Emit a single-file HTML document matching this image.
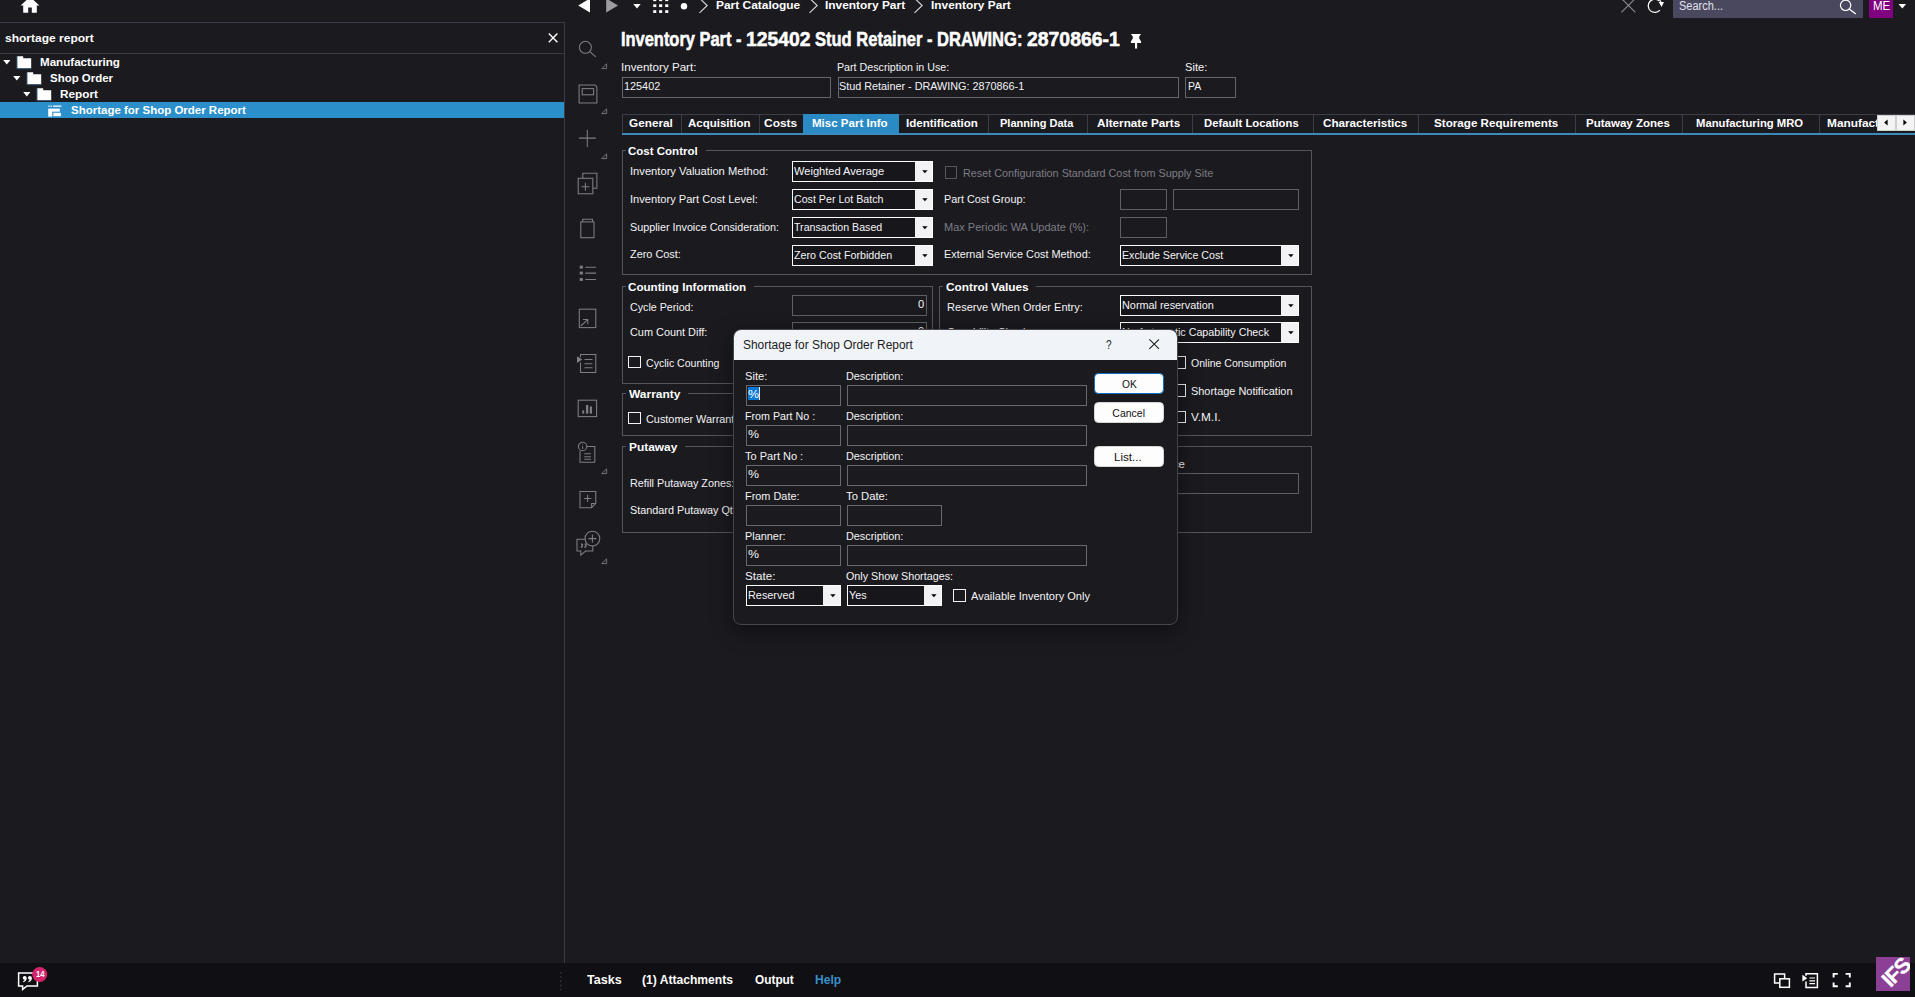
<!DOCTYPE html>
<html><head><meta charset="utf-8"><title>Inventory Part</title>
<style>
html,body{margin:0;padding:0;}
body{width:1915px;height:997px;overflow:hidden;background:#1b1a1f;font-family:"Liberation Sans",sans-serif;}
#root{position:absolute;left:0;top:0;width:1915px;height:997px;overflow:hidden;}
#root div,#root svg{position:absolute;box-sizing:border-box;}
svg{overflow:visible;}
.t{position:absolute;white-space:nowrap;transform-origin:0 0;display:block;}
</style></head>
<body><div id="root">
<div style="left:0px;top:963px;width:1915px;height:34px;background:#100f14;"></div>
<div style="left:0px;top:22px;width:565px;height:1px;background:#3b3b48;"></div>
<div style="left:0px;top:53px;width:565px;height:1px;background:#3b3b48;"></div>
<div style="left:564px;top:22px;width:1px;height:941px;background:#3b3b48;"></div>
<svg style="left:21px;top:0px;" width="18" height="13" viewBox="0 0 18 13"><path d="M9 -3.2 L-0.4 5.6 L2.2 5.6 L2.2 12.8 L7.2 12.8 L7.2 7.6 L10.8 7.6 L10.8 12.8 L15.8 12.8 L15.8 5.6 L18.4 5.6 Z" fill="#fff"/></svg>
<svg style="left:578px;top:0px;" width="13" height="13" viewBox="0 0 13 13"><path d="M12 -1.6 L12 12.6 L0.2 5.5 Z" fill="#fff"/></svg>
<svg style="left:606px;top:0px;" width="13" height="13" viewBox="0 0 13 13"><path d="M0.2 -1.6 L0.2 12.6 L12 5.5 Z" fill="#9c9ca1"/></svg>
<svg style="left:633px;top:4px;" width="8" height="5" viewBox="0 0 8 5"><path d="M0.3 0 L7.7 0 L4 4.6 Z" fill="#fff"/></svg>
<svg style="left:652.8px;top:0px;" width="16" height="13" viewBox="0 0 16 13"><rect x="0.2" y="-1.6" width="3.1" height="2.75" fill="#fff"/><rect x="0.2" y="4.3" width="3.1" height="2.75" fill="#fff"/><rect x="0.2" y="10.2" width="3.1" height="2.75" fill="#fff"/><rect x="6.1" y="-1.6" width="3.1" height="2.75" fill="#fff"/><rect x="6.1" y="4.3" width="3.1" height="2.75" fill="#fff"/><rect x="6.1" y="10.2" width="3.1" height="2.75" fill="#fff"/><rect x="12.2" y="-1.6" width="3.1" height="2.75" fill="#fff"/><rect x="12.2" y="4.3" width="3.1" height="2.75" fill="#fff"/><rect x="12.2" y="10.2" width="3.1" height="2.75" fill="#fff"/></svg>
<svg style="left:680px;top:2px;" width="8" height="8" viewBox="0 0 8 8"><circle cx="4" cy="4.3" r="3.2" fill="#fff"/></svg>
<svg style="left:698.8px;top:0px;" width="10" height="13" viewBox="0 0 10 13"><path d="M0.5 -1.8 L8.2 5.5 L0.5 12.8" fill="none" stroke="#d8d8dc" stroke-width="1.1"/></svg>
<svg style="left:808.6px;top:0px;" width="10" height="13" viewBox="0 0 10 13"><path d="M0.5 -1.8 L8.2 5.5 L0.5 12.8" fill="none" stroke="#d8d8dc" stroke-width="1.1"/></svg>
<svg style="left:913.9px;top:0px;" width="10" height="13" viewBox="0 0 10 13"><path d="M0.5 -1.8 L8.2 5.5 L0.5 12.8" fill="none" stroke="#d8d8dc" stroke-width="1.1"/></svg>
<span class="t" style="left:716.10px;top:-1.78px;font-size:11.5px;line-height:15px;color:#ffffff;font-weight:700;transform:scaleX(1.0373);">Part Catalogue</span>
<span class="t" style="left:825.40px;top:-1.78px;font-size:11.5px;line-height:15px;color:#ffffff;font-weight:700;transform:scaleX(1.0358);">Inventory Part</span>
<span class="t" style="left:930.70px;top:-1.78px;font-size:11.5px;line-height:15px;color:#ffffff;font-weight:700;transform:scaleX(1.0320);">Inventory Part</span>
<svg style="left:1621px;top:0px;" width="15" height="13" viewBox="0 0 15 13"><path d="M0.4 -1.6 L14.4 12.4 M14.4 -1.6 L0.4 12.4" stroke="#8e8e93" stroke-width="1.1" fill="none"/></svg>
<svg style="left:1648px;top:0px;" width="18" height="14" viewBox="0 0 18 14"><path d="M11.86 10.14 A6.6 6.6 0 1 1 11.2 0.9" fill="none" stroke="#fff" stroke-width="1.25"/><path d="M10.7 2.1 L16 2.1 L13.6 7 Z" fill="#fff"/><path d="M11.2 -1 L13 2.4" stroke="#fff" stroke-width="1.2"/></svg>
<div style="left:1673px;top:0px;width:190px;height:18px;background:#4a485e;"></div>
<span class="t" style="left:1679.10px;top:-2.16px;font-size:12px;line-height:16px;color:#e2e2f0;transform:scaleX(0.9161);">Search...</span>
<svg style="left:1838px;top:0px;" width="20" height="16" viewBox="0 0 20 16"><circle cx="7.6" cy="5.3" r="5.2" fill="none" stroke="#fff" stroke-width="1.2"/><path d="M11.3 9 L17.8 13.9" stroke="#fff" stroke-width="1.3"/></svg>
<div style="left:1869px;top:0px;width:24px;height:17.5px;background:#800080;"></div>
<span class="t" style="left:1873.10px;top:-3.00px;font-size:13px;line-height:17px;color:#ffffff;transform:scaleX(0.8872);">ME</span>
<svg style="left:1898px;top:4px;" width="9" height="5" viewBox="0 0 9 5"><path d="M0.5 0 L8.1 0 L4.3 4.4 Z" fill="#fff"/></svg>
<span class="t" style="left:5.10px;top:31.19px;font-size:11px;line-height:14px;color:#ffffff;font-weight:700;transform:scaleX(1.0923);">shortage report</span>
<svg style="left:548px;top:33px;" width="10" height="10" viewBox="0 0 10 10"><path d="M0.8 0.6 L9.4 9.2 M9.4 0.6 L0.8 9.2" stroke="#fff" stroke-width="1.4" fill="none"/></svg>
<svg style="left:3px;top:60.2px;" width="8" height="5" viewBox="0 0 8 5"><path d="M0.2 0 L7.4 0 L3.8 4.6 Z" fill="#fff"/></svg>
<svg style="left:17px;top:56.3px;" width="15" height="13" viewBox="0 0 15 13"><path d="M0.3 0.2 L6.2 0.2 L6.2 2.2 L14.2 2.2 L14.2 12.2 L0.3 12.2 Z" fill="#fff"/><path d="M0.3 12.8 L14.6 12.8 M-0.3 0.2 L-0.3 12.6" stroke="#2f6f9a" stroke-width="0.8" opacity="0.7"/></svg>
<span class="t" style="left:39.70px;top:55.19px;font-size:11px;line-height:14px;color:#ffffff;font-weight:700;transform:scaleX(1.0544);">Manufacturing</span>
<svg style="left:13px;top:76.2px;" width="8" height="5" viewBox="0 0 8 5"><path d="M0.2 0 L7.4 0 L3.8 4.6 Z" fill="#fff"/></svg>
<svg style="left:27px;top:72.3px;" width="15" height="13" viewBox="0 0 15 13"><path d="M0.3 0.2 L6.2 0.2 L6.2 2.2 L14.2 2.2 L14.2 12.2 L0.3 12.2 Z" fill="#fff"/><path d="M0.3 12.8 L14.6 12.8 M-0.3 0.2 L-0.3 12.6" stroke="#2f6f9a" stroke-width="0.8" opacity="0.7"/></svg>
<span class="t" style="left:50.40px;top:71.19px;font-size:11px;line-height:14px;color:#ffffff;font-weight:700;transform:scaleX(1.0411);">Shop Order</span>
<svg style="left:23px;top:92.2px;" width="8" height="5" viewBox="0 0 8 5"><path d="M0.2 0 L7.4 0 L3.8 4.6 Z" fill="#fff"/></svg>
<svg style="left:37px;top:88.3px;" width="15" height="13" viewBox="0 0 15 13"><path d="M0.3 0.2 L6.2 0.2 L6.2 2.2 L14.2 2.2 L14.2 12.2 L0.3 12.2 Z" fill="#fff"/><path d="M0.3 12.8 L14.6 12.8 M-0.3 0.2 L-0.3 12.6" stroke="#2f6f9a" stroke-width="0.8" opacity="0.7"/></svg>
<span class="t" style="left:59.80px;top:87.19px;font-size:11px;line-height:14px;color:#ffffff;font-weight:700;transform:scaleX(1.0690);">Report</span>
<div style="left:0px;top:102px;width:564px;height:16px;background:#2a8fcb;"></div>
<svg style="left:48px;top:106px;" width="14" height="11" viewBox="0 0 14 11"><path d="M0.3 0.2 h1.4 M2.6 0.2 h1.4 M5 0.2 h8.4" stroke="#fff" stroke-width="1.3"/><rect x="0.2" y="2.6" width="11.6" height="8" fill="#fff"/><rect x="4.8" y="6.2" width="8.6" height="4.6" fill="#fff" stroke="#2a8fcb" stroke-width="1.1"/></svg>
<span class="t" style="left:70.80px;top:103.19px;font-size:11px;line-height:14px;color:#ffffff;font-weight:700;transform:scaleX(1.0444);">Shortage for Shop Order Report</span>
<svg style="left:578px;top:40px;" width="20" height="18" viewBox="0 0 20 18"><circle cx="7.4" cy="7.3" r="6" fill="none" stroke="#7e7e85" stroke-width="1.05"/><path d="M11.8 11.6 L17.8 16.8" fill="none" stroke="#7e7e85" stroke-width="1.05"/></svg>
<svg style="left:601px;top:63px;" width="7" height="7" viewBox="0 0 7 7"><path d="M5.6 0.8 L5.6 5.6 L0.8 5.6 Z" fill="none" stroke="#7e7e85" stroke-width="0.9"/></svg>
<svg style="left:578px;top:84px;" width="20" height="20" viewBox="0 0 20 20"><path d="M1.1 1 L15.6 1 Q18.9 1 18.9 4.2 L18.9 18.9 L1.1 18.9 Z" fill="none" stroke="#7e7e85" stroke-width="1.05"/><rect x="4.2" y="4.6" width="11.4" height="6.2" fill="none" stroke="#7e7e85" stroke-width="1.05"/></svg>
<svg style="left:601px;top:108px;" width="7" height="7" viewBox="0 0 7 7"><path d="M5.6 0.8 L5.6 5.6 L0.8 5.6 Z" fill="none" stroke="#7e7e85" stroke-width="0.9"/></svg>
<svg style="left:578px;top:129px;" width="20" height="19" viewBox="0 0 20 19"><path d="M1 9.1 L17.8 9.1 M9.3 1 L9.3 18" fill="none" stroke="#7e7e85" stroke-width="1.05"/></svg>
<svg style="left:601px;top:153px;" width="7" height="7" viewBox="0 0 7 7"><path d="M5.6 0.8 L5.6 5.6 L0.8 5.6 Z" fill="none" stroke="#7e7e85" stroke-width="0.9"/></svg>
<svg style="left:577px;top:172px;" width="21" height="23" viewBox="0 0 21 23"><path d="M5.8 6.2 L5.8 1.3 L19.9 1.3 L19.9 16.2 L15.8 16.2" fill="none" stroke="#7e7e85" stroke-width="1.05"/><rect x="1.2" y="6.3" width="14.6" height="15.5" fill="none" stroke="#7e7e85" stroke-width="1.05"/><path d="M4.4 14.8 L12.4 14.8 M8.4 10.8 L8.4 18.8" fill="none" stroke="#7e7e85" stroke-width="1.05"/></svg>
<svg style="left:579px;top:218px;" width="17" height="21" viewBox="0 0 17 21"><rect x="1.8" y="3.9" width="13.2" height="15.8" fill="none" stroke="#7e7e85" stroke-width="1.05"/><path d="M3.7 3.9 L3.7 1.3 L13.5 1.3 L13.5 3.9" fill="none" stroke="#7e7e85" stroke-width="1.05"/></svg>
<svg style="left:579px;top:265px;" width="19" height="17" viewBox="0 0 19 17"><path d="M6.3 2.2 L17.1 2.2 M6.3 8.1 L17.1 8.1 M6.3 14.5 L17.1 14.5" fill="none" stroke="#7e7e85" stroke-width="1.05"/><rect x="0.7" y="0.7" width="3.2" height="2.9" fill="#7e7e85"/><rect x="0.7" y="6.6" width="3.2" height="2.9" fill="#7e7e85"/><rect x="0.7" y="13" width="3.2" height="2.9" fill="#7e7e85"/></svg>
<svg style="left:578px;top:308px;" width="19" height="21" viewBox="0 0 19 21"><rect x="1.3" y="1.2" width="16.5" height="18.4" fill="none" stroke="#7e7e85" stroke-width="1.05"/><path d="M2.8 18 L9.6 11.6 M4.9 11.4 L9.8 11.4 L9.8 16.2" fill="none" stroke="#7e7e85" stroke-width="1.05"/></svg>
<svg style="left:576px;top:353px;" width="21" height="21" viewBox="0 0 21 21"><path d="M4.5 4.2 L4.5 1.4 L19.8 1.4 L19.8 19.4 L4.5 19.4 L4.5 9.5" fill="none" stroke="#7e7e85" stroke-width="1.05"/><path d="M1 3.2 L6.3 6.6 L1 9.9 Z" fill="#7e7e85"/><path d="M8.5 6.5 L16.4 6.5 M8.5 10.7 L16.4 10.7 M8.5 14.7 L16.4 14.7" fill="none" stroke="#7e7e85" stroke-width="1.05"/></svg>
<svg style="left:577px;top:399px;" width="21" height="19" viewBox="0 0 21 19"><rect x="1.2" y="1.2" width="18.4" height="16.4" fill="none" stroke="#7e7e85" stroke-width="1.05"/><rect x="5.3" y="11.3" width="1.9" height="3.3" fill="#7e7e85"/><rect x="9" y="6" width="2.3" height="8.6" fill="#7e7e85"/><rect x="12.8" y="7.5" width="2.2" height="7.1" fill="#7e7e85"/></svg>
<svg style="left:577px;top:441px;" width="19" height="23" viewBox="0 0 19 23"><circle cx="5.6" cy="5.5" r="4.2" fill="none" stroke="#7e7e85" stroke-width="1.05"/><path d="M5.6 3.4 L5.6 4.2 M5.6 5.2 L5.6 8" stroke="#7e7e85" stroke-width="1"/><path d="M9.8 5.5 L17.8 5.5 L17.8 21.3 L3 21.3 L3 9.7" fill="none" stroke="#7e7e85" stroke-width="1.05"/><path d="M7.2 12.8 L13.9 12.8 M7.2 15.8 L13.9 15.8 M7.2 18.3 L13.9 18.3" fill="none" stroke="#7e7e85" stroke-width="1.05"/></svg>
<svg style="left:601px;top:467.5px;" width="7" height="7" viewBox="0 0 7 7"><path d="M5.6 0.8 L5.6 5.6 L0.8 5.6 Z" fill="none" stroke="#7e7e85" stroke-width="0.9"/></svg>
<svg style="left:579px;top:490px;" width="18" height="19" viewBox="0 0 18 19"><path d="M1 1.4 L16.8 1.4 L16.8 13.4 L12.6 17.7 L1 17.7 Z" fill="none" stroke="#7e7e85" stroke-width="1.05"/><path d="M12.6 17.7 L12.6 13.4 L16.8 13.4" fill="none" stroke="#7e7e85" stroke-width="1.05"/><path d="M5 8.4 L12.2 8.4 M8.6 4.8 L8.6 12" fill="none" stroke="#7e7e85" stroke-width="1.05"/></svg>
<svg style="left:576px;top:530px;" width="26" height="27" viewBox="0 0 26 27"><path d="M9.4 9.3 L1 9.3 L1 21 L4.8 21 L4.8 25.1 L9.6 21 L16.8 21 L16.8 15.8" fill="none" stroke="#7e7e85" stroke-width="1.05"/><circle cx="16.4" cy="8.6" r="7.4" fill="none" stroke="#7e7e85" stroke-width="1.05"/><path d="M12.4 8.6 L20.4 8.6 M16.4 4.6 L16.4 12.6" fill="none" stroke="#7e7e85" stroke-width="1.05"/><path d="M5 14 q1.6 0 1.4 1.6 q-0.2 1.4 -1.6 2 M8.6 14 q1.6 0 1.4 1.6 q-0.2 1.4 -1.6 2" stroke="#7e7e85" stroke-width="1.5" fill="none"/></svg>
<svg style="left:601px;top:557.5px;" width="7" height="7" viewBox="0 0 7 7"><path d="M5.6 0.8 L5.6 5.6 L0.8 5.6 Z" fill="none" stroke="#7e7e85" stroke-width="0.9"/></svg>
<span class="t" style="left:620.50px;top:25.20px;font-size:20.5px;line-height:27px;color:#ffffff;font-weight:700;transform:scaleX(0.8013);-webkit-text-stroke:0.55px #fff;">Inventory Part -</span>
<span class="t" style="left:745.90px;top:25.20px;font-size:20.5px;line-height:27px;color:#ffffff;font-weight:700;transform:scaleX(0.9441);-webkit-text-stroke:0.55px #fff;">125402</span>
<span class="t" style="left:815.30px;top:25.20px;font-size:20.5px;line-height:27px;color:#ffffff;font-weight:700;transform:scaleX(0.8057);-webkit-text-stroke:0.55px #fff;">Stud Retainer - DRAWING:</span>
<span class="t" style="left:1026.50px;top:25.20px;font-size:20.5px;line-height:27px;color:#ffffff;font-weight:700;transform:scaleX(0.9465);-webkit-text-stroke:0.55px #fff;">2870866-1</span>
<svg style="left:1129px;top:33px;" width="14" height="16" viewBox="0 0 14 16"><path d="M1.9 0.9 L12.1 0.9 L10.2 3.4 L10.2 5.6 L12.1 8.6 L12.1 10 L8.1 10 L8.1 15.4 L6 15.4 L6 10 L1.9 10 L1.9 8.6 L3.8 5.6 L3.8 3.4 Z" fill="#fff"/></svg>
<span class="t" style="left:621.30px;top:60.39px;font-size:11px;line-height:14px;color:#f4f4f6;transform:scaleX(1.0539);">Inventory Part:</span>
<span class="t" style="left:837.00px;top:60.39px;font-size:11px;line-height:14px;color:#f4f4f6;transform:scaleX(0.9710);">Part Description in Use:</span>
<span class="t" style="left:1185.00px;top:60.39px;font-size:11px;line-height:14px;color:#f4f4f6;transform:scaleX(1.0129);">Site:</span>
<div style="left:622px;top:77px;width:209px;height:21px;border:1px solid #66666c;"></div>
<div style="left:838px;top:77px;width:341px;height:21px;border:1px solid #66666c;"></div>
<div style="left:1185px;top:77px;width:51px;height:21px;border:1px solid #66666c;"></div>
<span class="t" style="left:624.30px;top:79.19px;font-size:11px;line-height:14px;color:#f4f4f6;transform:scaleX(0.9859);">125402</span>
<span class="t" style="left:839.30px;top:79.19px;font-size:11px;line-height:14px;color:#f4f4f6;transform:scaleX(0.9824);">Stud Retainer - DRAWING: 2870866-1</span>
<span class="t" style="left:1187.50px;top:79.19px;font-size:11px;line-height:14px;color:#f4f4f6;transform:scaleX(0.9524);">PA</span>
<div style="left:622px;top:132.6px;width:1293px;height:2.4px;background:#3b8abb;"></div>
<div style="left:622px;top:114px;width:1293px;height:1px;background:#3d3d4a;"></div>
<div style="left:622px;top:114px;width:1px;height:19px;background:#3d3d4a;"></div>
<div style="left:803px;top:114px;width:95.5px;height:19px;background:#2a8ac4;"></div>
<div style="left:681px;top:115px;width:1px;height:18px;background:#3d3d4a;"></div>
<span class="t" style="left:628.80px;top:116.39px;font-size:11px;line-height:14px;color:#ffffff;font-weight:700;transform:scaleX(1.0715);">General</span>
<div style="left:759px;top:115px;width:1px;height:18px;background:#3d3d4a;"></div>
<span class="t" style="left:687.70px;top:116.39px;font-size:11px;line-height:14px;color:#ffffff;font-weight:700;transform:scaleX(1.0452);">Acquisition</span>
<span class="t" style="left:763.70px;top:116.39px;font-size:11px;line-height:14px;color:#ffffff;font-weight:700;transform:scaleX(1.0863);">Costs</span>
<span class="t" style="left:811.80px;top:116.39px;font-size:11px;line-height:14px;color:#ffffff;font-weight:700;transform:scaleX(1.0482);">Misc Part Info</span>
<div style="left:988px;top:115px;width:1px;height:18px;background:#3d3d4a;"></div>
<span class="t" style="left:906.40px;top:116.39px;font-size:11px;line-height:14px;color:#ffffff;font-weight:700;transform:scaleX(1.0504);">Identification</span>
<div style="left:1087px;top:115px;width:1px;height:18px;background:#3d3d4a;"></div>
<span class="t" style="left:1000.00px;top:116.39px;font-size:11px;line-height:14px;color:#ffffff;font-weight:700;">Planning Data</span>
<div style="left:1192px;top:115px;width:1px;height:18px;background:#3d3d4a;"></div>
<span class="t" style="left:1096.60px;top:116.39px;font-size:11px;line-height:14px;color:#ffffff;font-weight:700;transform:scaleX(1.0630);">Alternate Parts</span>
<div style="left:1313px;top:115px;width:1px;height:18px;background:#3d3d4a;"></div>
<span class="t" style="left:1204.00px;top:116.39px;font-size:11px;line-height:14px;color:#ffffff;font-weight:700;transform:scaleX(1.0260);">Default Locations</span>
<div style="left:1418px;top:115px;width:1px;height:18px;background:#3d3d4a;"></div>
<span class="t" style="left:1322.70px;top:116.39px;font-size:11px;line-height:14px;color:#ffffff;font-weight:700;transform:scaleX(1.0604);">Characteristics</span>
<div style="left:1575px;top:115px;width:1px;height:18px;background:#3d3d4a;"></div>
<span class="t" style="left:1433.60px;top:116.39px;font-size:11px;line-height:14px;color:#ffffff;font-weight:700;transform:scaleX(1.0590);">Storage Requirements</span>
<div style="left:1682px;top:115px;width:1px;height:18px;background:#3d3d4a;"></div>
<span class="t" style="left:1586.00px;top:116.39px;font-size:11px;line-height:14px;color:#ffffff;font-weight:700;transform:scaleX(1.0477);">Putaway Zones</span>
<div style="left:1819px;top:115px;width:1px;height:18px;background:#3d3d4a;"></div>
<span class="t" style="left:1696.10px;top:116.39px;font-size:11px;line-height:14px;color:#ffffff;font-weight:700;transform:scaleX(1.0249);">Manufacturing MRO</span>
<span class="t" style="left:1826.90px;top:116.39px;font-size:11px;line-height:14px;color:#ffffff;font-weight:700;transform:scaleX(1.0782);">Manufacturing Standards</span>
<div style="left:1877px;top:114.5px;width:19px;height:16.5px;background:#f4f4f4;border:1px solid #cfcfcf;"></div>
<div style="left:1896px;top:114.5px;width:19px;height:16.5px;background:#f4f4f4;border:1px solid #cfcfcf;"></div>
<svg style="left:1883px;top:119px;" width="6" height="7" viewBox="0 0 6 7"><path d="M4.6 0.4 L4.6 6.4 L1.2 3.4 Z" fill="#000"/></svg>
<svg style="left:1902px;top:119px;" width="6" height="7" viewBox="0 0 6 7"><path d="M1.4 0.4 L1.4 6.4 L4.8 3.4 Z" fill="#000"/></svg>
<div style="left:622px;top:150px;width:690px;height:125px;border:1px solid #55555f;"></div>
<div style="left:625.9px;top:149px;width:80.5px;height:3px;background:#1b1a1f;"></div>
<span class="t" style="left:628.40px;top:143.99px;font-size:11px;line-height:14px;color:#ffffff;font-weight:700;transform:scaleX(1.0464);">Cost Control</span>
<span class="t" style="left:630.20px;top:164.19px;font-size:11px;line-height:14px;color:#f4f4f6;transform:scaleX(1.0156);">Inventory Valuation Method:</span>
<span class="t" style="left:630.20px;top:191.99px;font-size:11px;line-height:14px;color:#f4f4f6;transform:scaleX(1.0098);">Inventory Part Cost Level:</span>
<span class="t" style="left:630.20px;top:219.99px;font-size:11px;line-height:14px;color:#f4f4f6;transform:scaleX(0.9792);">Supplier Invoice Consideration:</span>
<span class="t" style="left:630.20px;top:247.19px;font-size:11px;line-height:14px;color:#f4f4f6;transform:scaleX(0.9891);">Zero Cost:</span>
<div style="left:792px;top:161px;width:141px;height:21px;background:#17161b;border:1.5px solid #fdfdfd;"></div>
<div style="left:914.5px;top:162px;width:17.5px;height:19px;background:#f2f2f4;"></div>
<svg style="left:921.5px;top:170px;" width="6" height="4" viewBox="0 0 6 4"><path d="M0.2 0.3 L5.6 0.3 L2.9 3.2 Z" fill="#000"/></svg>
<span class="t" style="left:794.30px;top:164.09px;font-size:11px;line-height:14px;color:#f4f4f6;transform:scaleX(1.0078);">Weighted Average</span>
<div style="left:792px;top:189px;width:141px;height:21px;background:#17161b;border:1.5px solid #fdfdfd;"></div>
<div style="left:914.5px;top:190px;width:17.5px;height:19px;background:#f2f2f4;"></div>
<svg style="left:921.5px;top:198px;" width="6" height="4" viewBox="0 0 6 4"><path d="M0.2 0.3 L5.6 0.3 L2.9 3.2 Z" fill="#000"/></svg>
<span class="t" style="left:794.30px;top:192.09px;font-size:11px;line-height:14px;color:#f4f4f6;transform:scaleX(0.9683);">Cost Per Lot Batch</span>
<div style="left:792px;top:217px;width:141px;height:21px;background:#17161b;border:1.5px solid #fdfdfd;"></div>
<div style="left:914.5px;top:218px;width:17.5px;height:19px;background:#f2f2f4;"></div>
<svg style="left:921.5px;top:226px;" width="6" height="4" viewBox="0 0 6 4"><path d="M0.2 0.3 L5.6 0.3 L2.9 3.2 Z" fill="#000"/></svg>
<span class="t" style="left:794.30px;top:220.09px;font-size:11px;line-height:14px;color:#f4f4f6;transform:scaleX(0.9659);">Transaction Based</span>
<div style="left:792px;top:245px;width:141px;height:21px;background:#17161b;border:1.5px solid #fdfdfd;"></div>
<div style="left:914.5px;top:246px;width:17.5px;height:19px;background:#f2f2f4;"></div>
<svg style="left:921.5px;top:254px;" width="6" height="4" viewBox="0 0 6 4"><path d="M0.2 0.3 L5.6 0.3 L2.9 3.2 Z" fill="#000"/></svg>
<span class="t" style="left:794.30px;top:248.09px;font-size:11px;line-height:14px;color:#f4f4f6;transform:scaleX(0.9733);">Zero Cost Forbidden</span>
<div style="left:944.8px;top:166.2px;width:12.6px;height:12.6px;border:1.2px solid #56565d;"></div>
<span class="t" style="left:962.70px;top:166.39px;font-size:11px;line-height:14px;color:#7d7d84;transform:scaleX(0.9836);">Reset Configuration Standard Cost from Supply Site</span>
<span class="t" style="left:944.00px;top:191.99px;font-size:11px;line-height:14px;color:#f4f4f6;transform:scaleX(0.9873);">Part Cost Group:</span>
<div style="left:1120px;top:189px;width:47px;height:21px;border:1px solid #5e5e65;"></div>
<div style="left:1173px;top:189px;width:126px;height:21px;border:1px solid #5e5e65;"></div>
<span class="t" style="left:944.00px;top:220.09px;font-size:11px;line-height:14px;color:#7d7d84;">Max Periodic WA Update (%):</span>
<div style="left:1120px;top:217px;width:47px;height:21px;border:1px solid #5e5e65;"></div>
<span class="t" style="left:944.00px;top:246.89px;font-size:11px;line-height:14px;color:#f4f4f6;transform:scaleX(0.9874);">External Service Cost Method:</span>
<div style="left:1120px;top:245px;width:179px;height:21px;background:#17161b;border:1.5px solid #fdfdfd;"></div>
<div style="left:1280.5px;top:246px;width:17.5px;height:19px;background:#f2f2f4;"></div>
<svg style="left:1287.5px;top:254px;" width="6" height="4" viewBox="0 0 6 4"><path d="M0.2 0.3 L5.6 0.3 L2.9 3.2 Z" fill="#000"/></svg>
<span class="t" style="left:1122.30px;top:248.09px;font-size:11px;line-height:14px;color:#f4f4f6;transform:scaleX(0.9680);">Exclude Service Cost</span>
<div style="left:622px;top:286px;width:311px;height:98px;border:1px solid #55555f;"></div>
<div style="left:625.9px;top:285px;width:128.5px;height:3px;background:#1b1a1f;"></div>
<span class="t" style="left:628.40px;top:279.99px;font-size:11px;line-height:14px;color:#ffffff;font-weight:700;transform:scaleX(1.0562);">Counting Information</span>
<span class="t" style="left:630.20px;top:299.79px;font-size:11px;line-height:14px;color:#f4f4f6;transform:scaleX(0.9706);">Cycle Period:</span>
<span class="t" style="left:630.20px;top:324.89px;font-size:11px;line-height:14px;color:#f4f4f6;transform:scaleX(0.9902);">Cum Count Diff:</span>
<div style="left:792px;top:295px;width:135px;height:21px;border:1px solid #5e5e65;"></div>
<div style="left:792px;top:322px;width:135px;height:21px;border:1px solid #5e5e65;"></div>
<span class="t" style="left:917.70px;top:296.99px;font-size:11px;line-height:14px;color:#f4f4f6;transform:scaleX(1.0122);">0</span>
<span class="t" style="left:917.70px;top:323.99px;font-size:11px;line-height:14px;color:#f4f4f6;transform:scaleX(1.0122);">0</span>
<div style="left:628.2px;top:355.9px;width:12.6px;height:12.6px;border:1.4px solid #f0f0f2;"></div>
<span class="t" style="left:646.30px;top:355.99px;font-size:11px;line-height:14px;color:#f4f4f6;transform:scaleX(0.9605);">Cyclic Counting</span>
<div style="left:939px;top:286px;width:373px;height:150px;border:1px solid #55555f;"></div>
<div style="left:943.2px;top:285px;width:93.29999999999995px;height:3px;background:#1b1a1f;"></div>
<span class="t" style="left:945.70px;top:279.99px;font-size:11px;line-height:14px;color:#ffffff;font-weight:700;transform:scaleX(1.0736);">Control Values</span>
<span class="t" style="left:947.10px;top:300.39px;font-size:11px;line-height:14px;color:#f4f4f6;">Reserve When Order Entry:</span>
<span class="t" style="left:947.10px;top:325.39px;font-size:11px;line-height:14px;color:#f4f4f6;transform:scaleX(0.9861);">Capability Check:</span>
<div style="left:1120px;top:295px;width:179px;height:21px;background:#17161b;border:1.5px solid #fdfdfd;"></div>
<div style="left:1280.5px;top:296px;width:17.5px;height:19px;background:#f2f2f4;"></div>
<svg style="left:1287.5px;top:304px;" width="6" height="4" viewBox="0 0 6 4"><path d="M0.2 0.3 L5.6 0.3 L2.9 3.2 Z" fill="#000"/></svg>
<span class="t" style="left:1122.30px;top:298.09px;font-size:11px;line-height:14px;color:#f4f4f6;transform:scaleX(0.9869);">Normal reservation</span>
<div style="left:1120px;top:322px;width:179px;height:21px;background:#17161b;border:1.5px solid #fdfdfd;"></div>
<div style="left:1280.5px;top:323px;width:17.5px;height:19px;background:#f2f2f4;"></div>
<svg style="left:1287.5px;top:331px;" width="6" height="4" viewBox="0 0 6 4"><path d="M0.2 0.3 L5.6 0.3 L2.9 3.2 Z" fill="#000"/></svg>
<span class="t" style="left:1122.30px;top:325.09px;font-size:11px;line-height:14px;color:#f4f4f6;transform:scaleX(0.9734);">No Automatic Capability Check</span>
<div style="left:1173.3px;top:356.2px;width:12.6px;height:12.6px;border:1.4px solid #f0f0f2;"></div>
<span class="t" style="left:1191.30px;top:356.29px;font-size:11px;line-height:14px;color:#f4f4f6;transform:scaleX(0.9571);">Online Consumption</span>
<div style="left:1173.3px;top:384.3px;width:12.6px;height:12.6px;border:1.4px solid #f0f0f2;"></div>
<span class="t" style="left:1191.30px;top:384.19px;font-size:11px;line-height:14px;color:#f4f4f6;transform:scaleX(0.9939);">Shortage Notification</span>
<div style="left:1173.3px;top:410.5px;width:12.6px;height:12.6px;border:1.4px solid #f0f0f2;"></div>
<span class="t" style="left:1191.30px;top:409.99px;font-size:11px;line-height:14px;color:#f4f4f6;transform:scaleX(1.0715);">V.M.I.</span>
<div style="left:622px;top:393px;width:311px;height:43px;border:1px solid #55555f;"></div>
<div style="left:626.3px;top:392px;width:61.700000000000045px;height:3px;background:#1b1a1f;"></div>
<span class="t" style="left:628.80px;top:386.79px;font-size:11px;line-height:14px;color:#ffffff;font-weight:700;transform:scaleX(1.0892);">Warranty</span>
<div style="left:628.2px;top:411.8px;width:12.6px;height:12.6px;border:1.4px solid #f0f0f2;"></div>
<span class="t" style="left:646.30px;top:411.59px;font-size:11px;line-height:14px;color:#f4f4f6;transform:scaleX(0.9879);">Customer Warranty</span>
<div style="left:622px;top:446px;width:690px;height:87px;border:1px solid #55555f;"></div>
<div style="left:626.3px;top:445px;width:58.700000000000045px;height:3px;background:#1b1a1f;"></div>
<span class="t" style="left:628.80px;top:440.19px;font-size:11px;line-height:14px;color:#ffffff;font-weight:700;transform:scaleX(1.0820);">Putaway</span>
<span class="t" style="left:630.20px;top:475.69px;font-size:11px;line-height:14px;color:#f4f4f6;transform:scaleX(0.9803);">Refill Putaway Zones:</span>
<span class="t" style="left:630.20px;top:502.69px;font-size:11px;line-height:14px;color:#f4f4f6;transform:scaleX(0.9839);">Standard Putaway Qty:</span>
<span class="t" style="left:1119.50px;top:457.09px;font-size:11px;line-height:14px;color:#f4f4f6;transform:scaleX(1.0423);">Refill Source</span>
<div style="left:1120px;top:473px;width:179px;height:21px;border:1px solid #5e5e65;"></div>
<div style="left:732.5px;top:328.5px;width:445.5px;height:296.5px;background:#1b1a1f;border:1px solid #45454d;border-radius:8px;box-shadow:0 6px 22px rgba(0,0,0,0.45);overflow:hidden;"><div style="left:0;top:0;width:100%;height:30px;background:#f0f4f9;"></div></div>
<span class="t" style="left:743.00px;top:336.84px;font-size:12px;line-height:16px;color:#1b1b1b;transform:scaleX(0.9949);">Shortage for Shop Order Report</span>
<span class="t" style="left:1106.10px;top:336.84px;font-size:12px;line-height:16px;color:#1b1b1b;transform:scaleX(0.8374);">?</span>
<svg style="left:1149px;top:339px;" width="11" height="11" viewBox="0 0 11 11"><path d="M0.4 0.3 L10 9.9 M10 0.3 L0.4 9.9" stroke="#1b1b1b" stroke-width="1.05" fill="none"/></svg>
<span class="t" style="left:745.10px;top:368.99px;font-size:11px;line-height:14px;color:#f4f4f6;transform:scaleX(1.0175);">Site:</span>
<span class="t" style="left:846.30px;top:368.99px;font-size:11px;line-height:14px;color:#f4f4f6;transform:scaleX(0.9866);">Description:</span>
<div style="left:746px;top:385px;width:95px;height:21px;border:1px solid #68686e;"></div>
<div style="left:847px;top:385px;width:240px;height:21px;border:1px solid #68686e;"></div>
<div style="left:748px;top:387.2px;width:11.6px;height:12.9px;background:#0a78d6;"></div>
<span class="t" style="left:748.30px;top:386.69px;font-size:11px;line-height:14px;color:#ffffff;transform:scaleX(1.1246);">%</span>
<div style="left:759.3px;top:387.2px;width:1px;height:13px;background:#e8e8e8;"></div>
<span class="t" style="left:745.10px;top:408.79px;font-size:11px;line-height:14px;color:#f4f4f6;transform:scaleX(0.9733);">From Part No :</span>
<span class="t" style="left:846.30px;top:408.79px;font-size:11px;line-height:14px;color:#f4f4f6;transform:scaleX(0.9866);">Description:</span>
<div style="left:746px;top:425px;width:95px;height:21px;border:1px solid #68686e;"></div>
<div style="left:847px;top:425px;width:240px;height:21px;border:1px solid #68686e;"></div>
<span class="t" style="left:748.30px;top:426.69px;font-size:11px;line-height:14px;color:#f4f4f6;transform:scaleX(1.1246);">%</span>
<span class="t" style="left:745.10px;top:448.79px;font-size:11px;line-height:14px;color:#f4f4f6;">To Part No :</span>
<span class="t" style="left:846.30px;top:448.79px;font-size:11px;line-height:14px;color:#f4f4f6;transform:scaleX(0.9866);">Description:</span>
<div style="left:746px;top:465px;width:95px;height:21px;border:1px solid #68686e;"></div>
<div style="left:847px;top:465px;width:240px;height:21px;border:1px solid #68686e;"></div>
<span class="t" style="left:748.30px;top:466.69px;font-size:11px;line-height:14px;color:#f4f4f6;transform:scaleX(1.1246);">%</span>
<span class="t" style="left:745.10px;top:488.79px;font-size:11px;line-height:14px;color:#f4f4f6;transform:scaleX(0.9906);">From Date:</span>
<span class="t" style="left:846.30px;top:488.79px;font-size:11px;line-height:14px;color:#f4f4f6;transform:scaleX(1.0252);">To Date:</span>
<div style="left:746px;top:505px;width:95px;height:21px;border:1px solid #68686e;"></div>
<div style="left:847px;top:505px;width:95px;height:21px;border:1px solid #68686e;"></div>
<span class="t" style="left:745.10px;top:528.89px;font-size:11px;line-height:14px;color:#f4f4f6;transform:scaleX(0.9906);">Planner:</span>
<span class="t" style="left:846.30px;top:528.89px;font-size:11px;line-height:14px;color:#f4f4f6;transform:scaleX(0.9866);">Description:</span>
<div style="left:746px;top:545px;width:95px;height:21px;border:1px solid #68686e;"></div>
<div style="left:847px;top:545px;width:240px;height:21px;border:1px solid #68686e;"></div>
<span class="t" style="left:748.30px;top:546.69px;font-size:11px;line-height:14px;color:#f4f4f6;transform:scaleX(1.1246);">%</span>
<span class="t" style="left:745.10px;top:568.99px;font-size:11px;line-height:14px;color:#f4f4f6;transform:scaleX(1.0574);">State:</span>
<span class="t" style="left:846.30px;top:568.99px;font-size:11px;line-height:14px;color:#f4f4f6;transform:scaleX(0.9776);">Only Show Shortages:</span>
<div style="left:746px;top:585px;width:95px;height:21px;background:#17161b;border:1.5px solid #fdfdfd;"></div>
<div style="left:822.5px;top:586px;width:17.5px;height:19px;background:#f2f2f4;"></div>
<svg style="left:829.5px;top:594px;" width="6" height="4" viewBox="0 0 6 4"><path d="M0.2 0.3 L5.6 0.3 L2.9 3.2 Z" fill="#000"/></svg>
<span class="t" style="left:748.30px;top:588.09px;font-size:11px;line-height:14px;color:#f4f4f6;transform:scaleX(0.9877);">Reserved</span>
<div style="left:847px;top:585px;width:95px;height:21px;background:#17161b;border:1.5px solid #fdfdfd;"></div>
<div style="left:923.5px;top:586px;width:17.5px;height:19px;background:#f2f2f4;"></div>
<svg style="left:930.5px;top:594px;" width="6" height="4" viewBox="0 0 6 4"><path d="M0.2 0.3 L5.6 0.3 L2.9 3.2 Z" fill="#000"/></svg>
<span class="t" style="left:849.30px;top:588.09px;font-size:11px;line-height:14px;color:#f4f4f6;transform:scaleX(0.9859);">Yes</span>
<div style="left:953.2px;top:589.3px;width:12.6px;height:12.6px;border:1.4px solid #f0f0f2;"></div>
<span class="t" style="left:971.40px;top:588.99px;font-size:11px;line-height:14px;color:#f4f4f6;transform:scaleX(1.0049);">Available Inventory Only</span>
<div style="left:1094px;top:373px;width:70px;height:21px;background:#fdfdfd;border:1.6px solid #0b6fc8;border-radius:4.5px;"></div>
<span class="t" style="left:1121.50px;top:376.96px;font-size:10.5px;line-height:14px;color:#111;transform:scaleX(0.9755);">OK</span>
<div style="left:1094px;top:402px;width:70px;height:21px;background:#fdfdfd;border:1px solid #d6d6d6;border-radius:4.5px;"></div>
<span class="t" style="left:1112.30px;top:406.06px;font-size:10.5px;line-height:14px;color:#111;">Cancel</span>
<div style="left:1094px;top:446px;width:70px;height:21px;background:#fdfdfd;border:1px solid #d6d6d6;border-radius:4.5px;"></div>
<span class="t" style="left:1114.20px;top:449.76px;font-size:10.5px;line-height:14px;color:#111;transform:scaleX(1.1039);">List...</span>
<svg style="left:560px;top:971.5px;" width="2" height="19" viewBox="0 0 2 19"><rect x="0" y="0.0" width="1.6" height="1.6" fill="#30303a"/><rect x="0" y="4.2" width="1.6" height="1.6" fill="#30303a"/><rect x="0" y="8.4" width="1.6" height="1.6" fill="#30303a"/><rect x="0" y="12.6" width="1.6" height="1.6" fill="#30303a"/><rect x="0" y="16.8" width="1.6" height="1.6" fill="#30303a"/></svg>
<span class="t" style="left:587.30px;top:971.74px;font-size:12px;line-height:16px;color:#ffffff;font-weight:700;transform:scaleX(1.0471);">Tasks</span>
<span class="t" style="left:642.10px;top:971.74px;font-size:12px;line-height:16px;color:#ffffff;font-weight:700;transform:scaleX(1.0074);">(1) Attachments</span>
<span class="t" style="left:754.90px;top:971.74px;font-size:12px;line-height:16px;color:#ffffff;font-weight:700;transform:scaleX(0.9866);">Output</span>
<span class="t" style="left:815.40px;top:971.74px;font-size:12px;line-height:16px;color:#3a8fcb;font-weight:700;transform:scaleX(1.0071);">Help</span>
<svg style="left:17px;top:971px;" width="24" height="20" viewBox="0 0 24 20"><path d="M1.6 2 L20.4 2 L20.4 15 L10 15 L5.6 18.4 L5.6 15 L1.6 15 Z" fill="none" stroke="#fff" stroke-width="1.5"/><circle cx="7.7" cy="6.8" r="1.9" fill="#fff"/><path d="M9.6 6.8 Q9.8 9.9 6.4 11.2 L6 10.4 Q7.9 9.5 7.9 7.6 Z" fill="#fff"/><circle cx="12.9" cy="6.8" r="1.9" fill="#fff"/><path d="M14.8 6.8 Q15 9.9 11.6 11.2 L11.2 10.4 Q13.1 9.5 13.1 7.6 Z" fill="#fff"/></svg>
<svg style="left:32px;top:967px;" width="16" height="16" viewBox="0 0 16 16"><circle cx="7.7" cy="7.5" r="7.5" fill="#d6246c"/></svg>
<span class="t" style="left:35.50px;top:968.48px;font-size:9px;line-height:12px;color:#ffffff;font-weight:700;transform:scaleX(0.8587);">14</span>
<svg style="left:1773px;top:972px;" width="19" height="17" viewBox="0 0 19 17"><path d="M6.2 11 L1.6 11 L1.6 1.9 L11.6 1.9 L11.6 6" fill="none" stroke="#fff" stroke-width="1.5"/><rect x="6.8" y="6.8" width="9.6" height="8.5" fill="none" stroke="#fff" stroke-width="1.5"/></svg>
<svg style="left:1802px;top:972px;" width="18" height="17" viewBox="0 0 18 17"><path d="M4 3.8 L4 1.8 L15.4 1.8 L15.4 15.4 L4 15.4 L4 9.4" fill="none" stroke="#fff" stroke-width="1.5"/><path d="M0.4 2.8 L5.2 6.2 L0.4 9.6 Z" fill="#fff"/><path d="M7.4 6 L13 6 M7.4 8.8 L13 8.8 M7.4 11.6 L13 11.6" stroke="#fff" stroke-width="1.2"/></svg>
<svg style="left:1832px;top:972px;" width="20" height="16" viewBox="0 0 20 16"><path d="M1.6 5.4 L1.6 1.9 L5.8 1.9 M13.6 1.9 L17.8 1.9 L17.8 5.4 M17.8 10.6 L17.8 14.2 L13.6 14.2 M5.8 14.2 L1.6 14.2 L1.6 10.6" fill="none" stroke="#fff" stroke-width="1.9"/></svg>
<svg style="left:1876px;top:956.8px;overflow:hidden;" width="34.3" height="34.1" viewBox="0 0 34.3 34.1"><defs><clipPath id="lc"><rect x="0" y="0" width="34.3" height="34.1"/></clipPath></defs><rect x="0" y="0" width="34.3" height="34.1" fill="#8b3f95"/><g clip-path="url(#lc)"><text transform="translate(14.4,31.2) rotate(-45)" font-family="Liberation Sans, sans-serif" font-weight="700" font-size="21.5" letter-spacing="-1" fill="#fff" stroke="#fff" stroke-width="0.3">IFS</text></g></svg>
</div></body></html>
